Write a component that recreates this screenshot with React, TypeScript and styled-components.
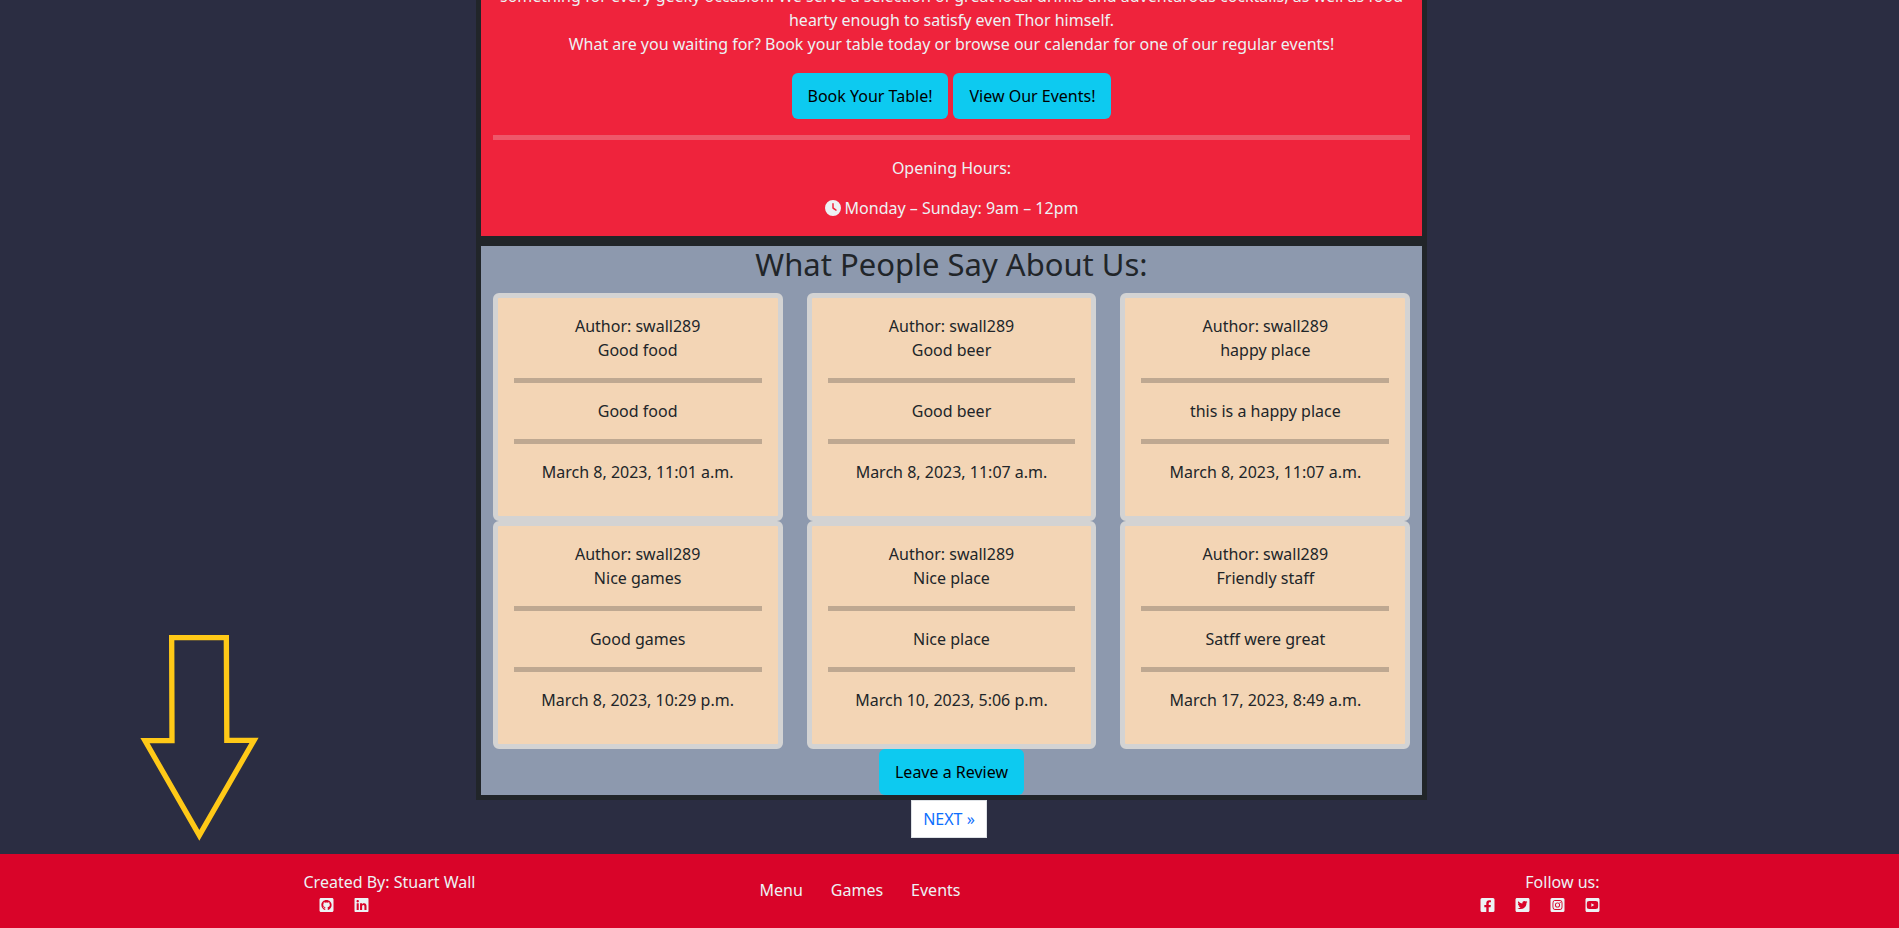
import React from "react";
import styled, { createGlobalStyle } from "styled-components";
import {
  FaFacebookSquare,
  FaGithubSquare,
  FaInstagramSquare,
  FaLinkedin,
  FaTwitterSquare,
  FaYoutubeSquare,
} from "react-icons/fa";
import { FaClock } from "react-icons/fa6";

const GlobalStyle = createGlobalStyle`
  *, *::before, *::after { box-sizing: border-box; }
  html { overflow-x: hidden; background: #2b2d42; }
  body {
    margin: 0;
    overflow: hidden;
    font-family: "Noto Sans", "Open Sans", sans-serif;
    font-size: 16px;
    line-height: 24px;
    color: #212529;
    background: #2b2d42;
  }
`;

const Page = styled.div`
  position: relative;
  display: flex;
  flex-direction: column;
  width: calc(100% + 4px);
  min-height: 100vh;
`;

const Main = styled.main`
  width: 50%;
  margin: 0 auto;
`;

const Panel = styled.section<{ $tone: "red" | "slate" }>`
  border: 5px solid #212529;
  text-align: center;
  background: ${(p) => (p.$tone === "red" ? "#ef233c" : "#8d99ae")};
  color: ${(p) => (p.$tone === "red" ? "#edf2f4" : "#212529")};
`;

const Intro = styled(Panel)`
  border-top: 0;
  padding: 0 12px 16px;
`;

const Blurb = styled.p`
  margin: -16px 0 17px;
`;

const Text = styled.p`
  margin: 0;
`;

const ButtonRow = styled.div`
  display: flex;
  justify-content: center;
  gap: 5px;
`;

const ActionButton = styled.button`
  height: 46px;
  padding: 0 16px;
  border: 0;
  border-radius: 6px;
  background: #0dcaf0;
  color: #000;
  font: inherit;
  cursor: pointer;
`;

const Rule = styled.hr`
  height: 5px;
  margin: 16px 0;
  border: 0;
  color: inherit;
  background: currentColor;
  opacity: 0.25;
`;

const Hours = styled.p`
  display: flex;
  align-items: center;
  justify-content: center;
  gap: 4px;
  margin: 16px 0 0;
`;

const Heading = styled.h2`
  margin: 0 0 11px;
  font-size: 31px;
  font-weight: 400;
  line-height: 36px;
`;

const Reviews = styled.div`
  display: grid;
  grid-template-columns: repeat(3, 1fr);
  column-gap: 24px;
  padding: 0 12px;
`;

const Card = styled.article`
  padding: 16px 16px 32px;
  border: 5px solid #d3d3d3;
  border-radius: 6px;
  background: #f3d5b5;
`;

const Pagination = styled.nav`
  display: flex;
  justify-content: center;
  margin-bottom: 16px;
  padding-right: 5px;
`;

const PageLink = styled.a`
  padding: 6px 11px;
  border: 1px solid #dee2e6;
  background: #fff;
  color: #0d6efd;
  text-decoration: none;
`;

const Footer = styled.footer`
  flex: 1;
  padding: 16px 0 10px;
  background: #d90429;
  color: #edf2f4;
`;

const FooterInner = styled.div`
  display: grid;
  grid-template-columns: 1fr 2fr 1fr;
  max-width: 1320px;
  margin: 0 auto;
  padding: 0 12px;
`;

const FooterBlock = styled.div<{ $end?: boolean }>`
  display: flex;
  flex-direction: column;
  align-items: ${(p) => (p.$end ? "flex-end" : "flex-start")};
`;

const Social = styled.div<{ $indent?: boolean }>`
  display: flex;
  gap: 20px;
  padding-left: ${(p) => (p.$indent ? "15px" : "0")};
`;

const SocialLink = styled.a`
  display: flex;
  align-items: center;
  justify-content: center;
  width: 15px;
  height: 22px;
  color: inherit;
`;

const FooterNav = styled.nav`
  display: flex;
  gap: 28px;
  padding: 8px 0 0 132px;
`;

const FooterLink = styled.a`
  color: inherit;
  text-decoration: none;
`;

const Arrow = styled.svg`
  position: absolute;
  top: 620px;
  left: 120px;
  width: 160px;
  height: 230px;
`;

const reviews = [
  { title: "Good food", body: "Good food", date: "March 8, 2023, 11:01 a.m." },
  { title: "Good beer", body: "Good beer", date: "March 8, 2023, 11:07 a.m." },
  { title: "happy place", body: "this is a happy place", date: "March 8, 2023, 11:07 a.m." },
  { title: "Nice games", body: "Good games", date: "March 8, 2023, 10:29 p.m." },
  { title: "Nice place", body: "Nice place", date: "March 10, 2023, 5:06 p.m." },
  { title: "Friendly staff", body: "Satff were great", date: "March 17, 2023, 8:49 a.m." },
];

export default function App() {
  return (
    <>
      <GlobalStyle />
      <Page>
        <Main>
          <Intro $tone="red">
            <Blurb>
              something for every geeky occasion. We serve a selection of great local drinks and
              adventurous cocktails, as well as food
              <br />
              hearty enough to satisfy even Thor himself.
              <br />
              What are you waiting for? Book your table today or browse our calendar for one of our
              regular events!
            </Blurb>
            <ButtonRow>
              <ActionButton type="button">Book Your Table!</ActionButton>
              <ActionButton type="button">View Our Events!</ActionButton>
            </ButtonRow>
            <Rule />
            <Text>Opening Hours:</Text>
            <Hours>
              <FaClock size={16} aria-hidden />
              Monday – Sunday: 9am – 12pm
            </Hours>
          </Intro>
          <Panel $tone="slate">
            <Heading>What People Say About Us:</Heading>
            <Reviews>
              {reviews.map((r, i) => (
                <Card key={i}>
                  <Text>Author: swall289</Text>
                  <Text>{r.title}</Text>
                  <Rule />
                  <Text>{r.body}</Text>
                  <Rule />
                  <Text>{r.date}</Text>
                </Card>
              ))}
            </Reviews>
            <ButtonRow>
              <ActionButton type="button">Leave a Review</ActionButton>
            </ButtonRow>
          </Panel>
        </Main>
        <Pagination aria-label="Reviews pages">
          <PageLink href="#next">NEXT »</PageLink>
        </Pagination>
        <Footer>
          <FooterInner>
            <FooterBlock>
              <Text>Created By: Stuart Wall</Text>
              <Social $indent>
                <SocialLink href="#github" aria-label="GitHub"><FaGithubSquare size={16} /></SocialLink>
                <SocialLink href="#linkedin" aria-label="LinkedIn"><FaLinkedin size={16} /></SocialLink>
              </Social>
            </FooterBlock>
            <FooterNav aria-label="Footer">
              <FooterLink href="#menu">Menu</FooterLink>
              <FooterLink href="#games">Games</FooterLink>
              <FooterLink href="#events">Events</FooterLink>
            </FooterNav>
            <FooterBlock $end>
              <Text>Follow us:</Text>
              <Social>
                <SocialLink href="#facebook" aria-label="Facebook"><FaFacebookSquare size={16} /></SocialLink>
                <SocialLink href="#twitter" aria-label="Twitter"><FaTwitterSquare size={16} /></SocialLink>
                <SocialLink href="#instagram" aria-label="Instagram"><FaInstagramSquare size={16} /></SocialLink>
                <SocialLink href="#youtube" aria-label="YouTube"><FaYoutubeSquare size={16} /></SocialLink>
              </Social>
            </FooterBlock>
          </FooterInner>
        </Footer>
        <Arrow viewBox="0 0 480 690" aria-hidden>
          <path
            d="M155 53H319L320.500 361H402L238 646L75 362H156Z"
            fill="none"
            stroke="#ffc917"
            strokeWidth="16"
            strokeLinejoin="miter"
          />
        </Arrow>
      </Page>
    </>
  );
}
